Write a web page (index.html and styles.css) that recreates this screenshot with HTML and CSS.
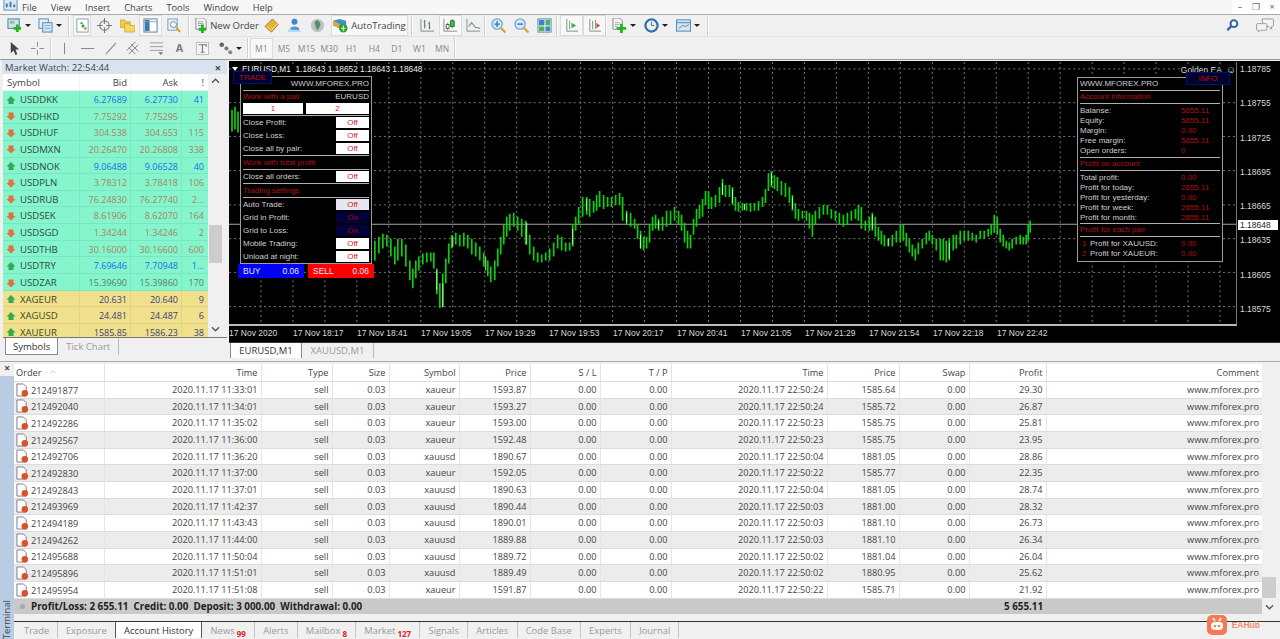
FILE: index.html
```html
<!DOCTYPE html>
<html lang="en">
<head>
  <meta charset="UTF-8" />
  <title>MetaTrader 4 - EURUSD,M1</title>
  <link rel="stylesheet" href="styles.css">
</head>
<body>

  <!-- icon sheet -->
  <svg class="icon-sheet" aria-hidden="true">
    <symbol id="i-app" viewBox="0 0 16 16"><rect x="1" y="2" width="14" height="12" fill="#dbe8f4" stroke="#5b8db8"/><path d="M4 11V7M8 11V5M12 11V8" stroke="#3a7ca5" stroke-width="2"/></symbol>
    <symbol id="i-new" viewBox="0 0 16 16"><rect x="1" y="1" width="12" height="10" fill="#cfe3ef" stroke="#3a7ca5"/><rect x="3" y="3" width="5" height="3" fill="#8fbf8f"/><path d="M11 7v8M7 11h8" stroke="#22b422" stroke-width="3"/></symbol>
    <symbol id="i-profile" viewBox="0 0 16 16"><rect x="1" y="1" width="10" height="10" fill="#e6f0f8" stroke="#4b86b4"/><rect x="5" y="5" width="10" height="10" fill="#d3e4f2" stroke="#4b86b4"/><path d="M7 8h6M7 11h6" stroke="#7fa8c8"/></symbol>
    <symbol id="i-mw" viewBox="0 0 16 16"><rect x="2" y="1" width="12" height="14" fill="#fff" stroke="#7d9cb5"/><path d="M5 6l2-2 2 2z" fill="#2ea84a"/><path d="M7 7h3v3H7z" fill="#2ea84a"/><path d="M9 10h4l-2 3z" fill="#e2703a"/></symbol>
    <symbol id="i-cross" viewBox="0 0 16 16"><circle cx="8" cy="8" r="5" fill="none" stroke="#888" stroke-width="1.200"/><path d="M8 0v6M8 10v6M0 8h6M10 8h6" stroke="#777" stroke-width="1.200"/></symbol>
    <symbol id="i-folder" viewBox="0 0 16 16"><path d="M0 2h5l1 2h5v6H0z" fill="#eec94f" stroke="#c49a25" stroke-width=".7"/><path d="M5 6h5l1 2h5v7H5z" fill="#f5d763" stroke="#c49a25" stroke-width=".7"/></symbol>
    <symbol id="i-nav" viewBox="0 0 16 16"><rect x="1" y="1" width="14" height="14" fill="#fff" stroke="#4f7ea8"/><rect x="2" y="2" width="5" height="12" fill="#3f79ad"/><path d="M1 4h14" stroke="#7fa8c8"/></symbol>
    <symbol id="i-docglass" viewBox="0 0 16 16"><rect x="2" y="1" width="10" height="12" fill="#eaf1f6" stroke="#7d9cb5"/><circle cx="8" cy="7" r="3.200" fill="#fff" stroke="#5e87a6"/><path d="M11 10l4 5" stroke="#c9a227" stroke-width="2"/></symbol>
    <symbol id="i-order" viewBox="0 0 16 16"><path d="M2 0h8l3 3v9H2z" fill="#f7f7f7" stroke="#8a8a8a"/><path d="M4 4h6M4 6h6M4 8h4" stroke="#999"/><path d="M9 7v9M5 12h8" stroke="#22b422" stroke-width="3"/></symbol>
    <symbol id="i-gold" viewBox="0 0 16 16"><path d="M9 1l6 6-7 8-7-6z" fill="#e8b23a" stroke="#a97c18"/><path d="M3 9l5 4 6-7" fill="none" stroke="#fbe08a"/></symbol>
    <symbol id="i-person" viewBox="0 0 16 16"><circle cx="8" cy="4" r="3.200" fill="#3f86cf"/><path d="M3 12c0-4 10-4 10 0v1H3z" fill="#4f97dc"/><path d="M1 13c2-2 4-1 5 0 2-1 7-1 9 2H1z" fill="#bcd9ef"/></symbol>
    <symbol id="i-globe" viewBox="0 0 16 16"><circle cx="8" cy="8" r="7" fill="#bcc4c4"/><path d="M6 3c3-1 5 1 5 4s-2 3-2 6c-2 0-3-3-3-4S4 5 6 3z" fill="#5d8d6a"/></symbol>
    <symbol id="i-auto" viewBox="0 0 16 16"><path d="M7 1l7 2v5l-7 3-7-3V3z" fill="#3f8fc9"/><path d="M0 3l7 3v5l-7-3z" fill="#e8a23a"/><circle cx="11" cy="11" r="4.500" fill="#2aa52a"/><path d="M11 8v6M8.600 11h4.800" stroke="#fff"/></symbol>
    <symbol id="i-bars" viewBox="0 0 16 16"><path d="M1 1v13h14" fill="none" stroke="#7d8f7d"/><path d="M5 2v9M4 4h1M5 8h1M10 4v8M9 6h1M10 10h1" stroke="#5d6f5d" stroke-width="1.100"/></symbol>
    <symbol id="i-candle" viewBox="0 0 16 16"><path d="M1 1v13h14" fill="none" stroke="#7d8f7d"/><path d="M5 5v8M10 1v10" stroke="#3a5"/><rect x="8" y="3" width="4" height="6" fill="#3fbf4f" stroke="#2a7a33"/><rect x="3.500" y="7" width="3" height="4" fill="#fff" stroke="#555"/></symbol>
    <symbol id="i-line" viewBox="0 0 16 16"><path d="M1 1v13h14" fill="none" stroke="#7d8f7d"/><path d="M3 9l3-4 4 5 5 1" fill="none" stroke="#7a8a7a" stroke-width="1.100"/></symbol>
    <symbol id="i-zplus" viewBox="0 0 16 16"><circle cx="6.500" cy="6.500" r="5.500" fill="#d8e9f7" stroke="#6aa3d6" stroke-width="1.300"/><path d="M6.500 3.500v6M3.500 6.500h6" stroke="#2f74b5" stroke-width="1.500"/><path d="M10.500 10.500l5 5" stroke="#d0a93a" stroke-width="2.400"/></symbol>
    <symbol id="i-zminus" viewBox="0 0 16 16"><circle cx="6.500" cy="6.500" r="5.500" fill="#d8e9f7" stroke="#6aa3d6" stroke-width="1.300"/><path d="M3.500 6.500h6" stroke="#2f74b5" stroke-width="1.500"/><path d="M10.500 10.500l5 5" stroke="#d0a93a" stroke-width="2.400"/></symbol>
    <symbol id="i-tile" viewBox="0 0 16 16"><rect x="1" y="1" width="14" height="14" fill="#fff" stroke="#4f86b4"/><rect x="2" y="2" width="6" height="6" fill="#3f86c4"/><rect x="9" y="2" width="5" height="6" fill="#4fae5f"/><rect x="2" y="9" width="6" height="5" fill="#4fae5f"/><rect x="9" y="9" width="5" height="5" fill="#3f86c4"/></symbol>
    <symbol id="i-shift" viewBox="0 0 16 16"><path d="M3 1v13h12" fill="none" stroke="#7d8f7d"/><path d="M6 3v9" stroke="#7d8f7d"/><path d="M8 5l5 3-5 3z" fill="#3fae4f"/></symbol>
    <symbol id="i-scroll" viewBox="0 0 16 16"><path d="M3 1v13h12" fill="none" stroke="#7d8f7d"/><path d="M6 3v9M9 2v10" stroke="#7d8f7d"/><path d="M10 5l4 3-4 3z" fill="#c9504a"/></symbol>
    <symbol id="i-docplus" viewBox="0 0 16 16"><path d="M1 0h7l3 3v9H1z" fill="#f4f4f4" stroke="#888"/><path d="M3 5h5M3 7h5M3 9h3" stroke="#aaa"/><path d="M10 6v10M5 11h10" stroke="#22b422" stroke-width="3"/></symbol>
    <symbol id="i-clock" viewBox="0 0 16 16"><circle cx="8" cy="8" r="6.500" fill="#e6f0f8" stroke="#2f6fa8" stroke-width="2.400"/><path d="M8 4v4h3" fill="none" stroke="#666"/></symbol>
    <symbol id="i-template" viewBox="0 0 16 16"><rect x=".5" y="2" width="15" height="12" fill="#d3e4f2" stroke="#4b86b4"/><path d="M.5 5h15" stroke="#4b86b4"/><path d="M3 11l4-3 3 1 4-2" fill="none" stroke="#6a8a9a"/></symbol>
    <symbol id="i-search" viewBox="0 0 16 16"><circle cx="9.500" cy="6" r="3.600" fill="#fff" stroke="#3a66a8" stroke-width="2.200"/><path d="M6.500 9l-4 4" stroke="#3a66a8" stroke-width="2.600"/></symbol>
    <symbol id="i-chat" viewBox="0 0 20 16"><path d="M7 1h11a1 1 0 011 1v6a1 1 0 01-1 1h-1v3l-3-3H8z" fill="#f4f4f4" stroke="#999"/><path d="M2 6h9a1 1 0 011 1v5a1 1 0 01-1 1H5l-2 2v-2H2a1 1 0 01-1-1V7a1 1 0 011-1z" fill="#f4f4f4" stroke="#999"/></symbol>
    <symbol id="i-cursor" viewBox="0 0 12 16"><path d="M2 1v12l3-3 2 5 2-1-2-5h4z" fill="#444"/></symbol>
    <symbol id="i-plus" viewBox="0 0 16 16"><path d="M8 1v5M8 10v5M1 8h5M10 8h5" stroke="#888"/></symbol>
    <symbol id="i-vline" viewBox="0 0 16 16"><path d="M8 2v12" stroke="#888" stroke-width="1.100"/></symbol>
    <symbol id="i-hline" viewBox="0 0 16 16"><path d="M1 8h14" stroke="#888" stroke-width="1.100"/></symbol>
    <symbol id="i-trend" viewBox="0 0 16 16"><path d="M3 14L14 2" stroke="#888" stroke-width="1.100"/></symbol>
    <symbol id="i-channel" viewBox="0 0 16 16"><path d="M1 10L10 1M3 14L13 4M5 3l8 8M3 7l7 7" stroke="#777"/></symbol>
    <symbol id="i-fibo" viewBox="0 0 16 16"><path d="M1 2h14M1 6h14M1 10h14" stroke="#999"/><path d="M10 12h5l-2.500 3z" fill="#777"/></symbol>
    <symbol id="i-text" viewBox="0 0 16 16"><rect x="1.500" y="1.500" width="13" height="13" fill="#f5f5f5" stroke="#bbb"/><path d="M4 4h8v2M8 4v8M6 12h4" fill="none" stroke="#777" stroke-width="1.200"/></symbol>
    <symbol id="i-shapes" viewBox="0 0 16 16"><circle cx="4" cy="4" r="2.500" fill="#666"/><circle cx="9" cy="8" r="2.200" fill="#777"/><circle cx="13" cy="12" r="2.200" fill="#888"/></symbol>
    <symbol id="i-up" viewBox="0 0 10 10"><path d="M5 1l4.500 4.500H7.500V9h-5V5.500H.5z" fill="#35a850"/></symbol>
    <symbol id="i-down" viewBox="0 0 10 10"><path d="M5 9.500L.5 5h2V1.500h5V5h2z" fill="#e2703a"/></symbol>
    <symbol id="i-sell" viewBox="0 0 14 14"><path d="M1 .500h7l3 3v10H1z" fill="#fff" stroke="#777"/><circle cx="9.500" cy="10.500" r="3.500" fill="#d9502a"/></symbol>
    <symbol id="i-chev-up" viewBox="0 0 10 6"><path d="M1 5l4-4 4 4" fill="none" stroke="#555" stroke-width="1.400"/></symbol>
    <symbol id="i-chev-down" viewBox="0 0 10 6"><path d="M1 1l4 4 4-4" fill="none" stroke="#555" stroke-width="1.400"/></symbol>
  </svg>

  <div class="app">

    <div class="menubar">
      <svg class="app-icon"><use href="#i-app"/></svg>
      <span class="menu-item">File</span>
      <span class="menu-item">View</span>
      <span class="menu-item">Insert</span>
      <span class="menu-item">Charts</span>
      <span class="menu-item">Tools</span>
      <span class="menu-item">Window</span>
      <span class="menu-item">Help</span>
      <div class="win-btns"><span>–</span><span>❐</span><span>×</span></div>
    </div>

    <div class="toolbar">
      <button class="tool tool-drop tool-drop-s"><svg class="ic"><use href="#i-new"/></svg><i class="caret"></i></button>
      <button class="tool tool-drop tool-drop-s"><svg class="ic"><use href="#i-profile"/></svg><i class="caret"></i></button>
      <i class="sep"></i>
      <button class="tool tool-narrow pressed"><svg class="ic"><use href="#i-mw"/></svg></button>
      <button class="tool"><svg class="ic"><use href="#i-cross"/></svg></button>
      <button class="tool"><svg class="ic"><use href="#i-folder"/></svg></button>
      <button class="tool pressed"><svg class="ic"><use href="#i-nav"/></svg></button>
      <button class="tool"><svg class="ic"><use href="#i-docglass"/></svg></button>
      <i class="sep"></i>
      <button class="tool tool-text tool-order"><svg class="ic"><use href="#i-order"/></svg>New Order</button>
      <button class="tool"><svg class="ic"><use href="#i-gold"/></svg></button>
      <button class="tool"><svg class="ic"><use href="#i-person"/></svg></button>
      <button class="tool"><svg class="ic"><use href="#i-globe"/></svg></button>
      <button class="tool tool-text tool-auto pressed"><svg class="ic"><use href="#i-auto"/></svg>AutoTrading</button>
      <i class="sep"></i>
      <button class="tool"><svg class="ic"><use href="#i-bars"/></svg></button>
      <button class="tool pressed"><svg class="ic"><use href="#i-candle"/></svg></button>
      <button class="tool"><svg class="ic"><use href="#i-line"/></svg></button>
      <i class="sep sep-tight"></i>
      <button class="tool"><svg class="ic"><use href="#i-zplus"/></svg></button>
      <button class="tool"><svg class="ic"><use href="#i-zminus"/></svg></button>
      <button class="tool"><svg class="ic"><use href="#i-tile"/></svg></button>
      <i class="sep sep-gap"></i>
      <button class="tool pressed"><svg class="ic"><use href="#i-shift"/></svg></button>
      <button class="tool pressed"><svg class="ic"><use href="#i-scroll"/></svg></button>
      <i class="sep sep-tight"></i>
      <button class="tool tool-drop"><svg class="ic"><use href="#i-docplus"/></svg><i class="caret"></i></button>
      <button class="tool tool-drop"><svg class="ic"><use href="#i-clock"/></svg><i class="caret"></i></button>
      <button class="tool tool-drop"><svg class="ic"><use href="#i-template"/></svg><i class="caret"></i></button>
      <i class="sep"></i>
      <div class="toolbar-right">
        <button class="tool"><svg class="ic"><use href="#i-search"/></svg></button>
        <button class="tool tool-chat"><svg class="ic ic-wide"><use href="#i-chat"/></svg></button>
      </div>
    </div>

    <div class="toolbar toolbar-low">
      <button class="tool"><svg class="ic"><use href="#i-cursor"/></svg></button>
      <button class="tool"><svg class="ic"><use href="#i-plus"/></svg></button>
      <i class="sep sep-low"></i>
      <button class="tool"><svg class="ic"><use href="#i-vline"/></svg></button>
      <button class="tool"><svg class="ic"><use href="#i-hline"/></svg></button>
      <button class="tool"><svg class="ic"><use href="#i-trend"/></svg></button>
      <button class="tool"><svg class="ic"><use href="#i-channel"/></svg></button>
      <button class="tool"><svg class="ic"><use href="#i-fibo"/></svg></button>
      <button class="tool tool-letter">A</button>
      <button class="tool"><svg class="ic"><use href="#i-text"/></svg></button>
      <button class="tool tool-drop"><svg class="ic"><use href="#i-shapes"/></svg><i class="caret"></i></button>
      <i class="sep sep-low"></i>
      <button class="tf pressed">M1</button>
      <button class="tf">M5</button>
      <button class="tf">M15</button>
      <button class="tf">M30</button>
      <button class="tf">H1</button>
      <button class="tf">H4</button>
      <button class="tf">D1</button>
      <button class="tf">W1</button>
      <button class="tf">MN</button>
      <i class="sep sep-low"></i>
    </div>

    <div class="workspace">

      <section class="market">
        <div class="market-title"><span>Market Watch: 22:54:44</span><b>×</b></div>
        <div class="market-body">
          <div class="market-list">
            <div class="mw-row mw-head"><span>Symbol</span><span>Bid</span><span>Ask</span><span>!</span></div>
            <div class="mw-row forex tick-up"><span><svg class="arrow"><use href="#i-up"/></svg>USDDKK</span><span>6.27689</span><span>6.27730</span><span>41</span></div>
            <div class="mw-row forex tick-down"><span><svg class="arrow"><use href="#i-down"/></svg>USDHKD</span><span>7.75292</span><span>7.75295</span><span>3</span></div>
            <div class="mw-row forex tick-down"><span><svg class="arrow"><use href="#i-down"/></svg>USDHUF</span><span>304.538</span><span>304.653</span><span>115</span></div>
            <div class="mw-row forex tick-down"><span><svg class="arrow"><use href="#i-down"/></svg>USDMXN</span><span>20.26470</span><span>20.26808</span><span>338</span></div>
            <div class="mw-row forex tick-up"><span><svg class="arrow"><use href="#i-up"/></svg>USDNOK</span><span>9.06488</span><span>9.06528</span><span>40</span></div>
            <div class="mw-row forex tick-down"><span><svg class="arrow"><use href="#i-down"/></svg>USDPLN</span><span>3.78312</span><span>3.78418</span><span>106</span></div>
            <div class="mw-row forex tick-down"><span><svg class="arrow"><use href="#i-down"/></svg>USDRUB</span><span>76.24830</span><span>76.27740</span><span>2...</span></div>
            <div class="mw-row forex tick-down"><span><svg class="arrow"><use href="#i-down"/></svg>USDSEK</span><span>8.61906</span><span>8.62070</span><span>164</span></div>
            <div class="mw-row forex tick-down"><span><svg class="arrow"><use href="#i-down"/></svg>USDSGD</span><span>1.34244</span><span>1.34246</span><span>2</span></div>
            <div class="mw-row forex tick-down"><span><svg class="arrow"><use href="#i-down"/></svg>USDTHB</span><span>30.16000</span><span>30.16600</span><span>600</span></div>
            <div class="mw-row forex tick-up"><span><svg class="arrow"><use href="#i-up"/></svg>USDTRY</span><span>7.69646</span><span>7.70948</span><span>1...</span></div>
            <div class="mw-row forex tick-flat"><span><svg class="arrow"><use href="#i-down"/></svg>USDZAR</span><span>15.39690</span><span>15.39860</span><span>170</span></div>
            <div class="mw-row metal"><span><svg class="arrow"><use href="#i-up"/></svg>XAGEUR</span><span>20.631</span><span>20.640</span><span>9</span></div>
            <div class="mw-row metal"><span><svg class="arrow"><use href="#i-up"/></svg>XAGUSD</span><span>24.481</span><span>24.487</span><span>6</span></div>
            <div class="mw-row metal"><span><svg class="arrow"><use href="#i-up"/></svg>XAUEUR</span><span>1585.85</span><span>1586.23</span><span>38</span></div>
          </div>
          <div class="vscroll">
            <svg class="chev"><use href="#i-chev-up"/></svg>
            <i class="thumb"></i>
            <svg class="chev chev-down"><use href="#i-chev-down"/></svg>
          </div>
        </div>
        <div class="mw-tabs">
          <span class="mw-tab active">Symbols</span>
          <span class="mw-tab">Tick Chart</span>
        </div>
      </section>

      <section class="chart-area">
        <div class="chart">
          <svg class="plot" viewBox="229 62 1008 264" preserveAspectRatio="none">
            <path class="grid" d="M261 62V326M293 62V326M325 62V326M357 62V326M389 62V326M421 62V326M453 62V326M485 62V326M517 62V326M549 62V326M581 62V326M613 62V326M645 62V326M677 62V326M709 62V326M741 62V326M773 62V326M805 62V326M837 62V326M869 62V326M901 62V326M933 62V326M965 62V326M997 62V326M1029 62V326M1061 62V326M1093 62V326M1125 62V326M1157 62V326M1189 62V326M1221 62V326"/>
            <path class="grid" d="M229 69H1237M229 103H1237M229 137H1237M229 171.500H1237M229 206H1237M229 240H1237M229 274H1237M229 308.500H1237"/>
            <path class="bid-line" d="M229 225.500H1237"/>
            <path class="candles" d="M232 110V132M235 107V130M238 112V133M375 242V262M379 238V255M383 235V250M387 236V248M391 240V258M395 248V266M398 240V262M402 240V258M406 246V268M410 262V282M413 270V290M416 262V280M419 258V272M423 255V266M427 254V264M431 254V263M434 254V270M437 270V296M440 285V310M443 275V309M446 260V285M449 245V265M452 236V250M456 234V246M460 236V248M464 234V248M468 236V250M472 240V256M476 244V258M480 248V262M484 254V268M488 262V278M491 268V284M495 262V282M498 250V268M501 238V256M504 226V246M507 218V238M510 215V232M514 214V228M518 218V232M522 220V238M526 222V246M530 236V256M534 248V262M538 254V264M542 256V264M546 254V262M550 250V262M554 244V258M558 236V250M562 238V252M566 244V253M570 244V252M573 226V248M576 218V232M579 208V226M583 198V218M587 198V216M590 200V218M594 202V214M597 196V212M600 192V208M604 196V210M608 198V208M612 198V208M616 196V206M620 194V206M623 198V222M627 212V226M631 214V228M635 220V230M638 226V240M641 232V250M644 238V252M647 238V250M650 226V244M653 218V232M656 216V230M659 220V232M663 218V232M667 212V228M671 212V226M675 208V222M679 212V226M682 216V232M685 224V244M688 232V250M691 236V250M694 220V236M697 210V228M700 206V220M703 200V218M706 192V206M709 192V210M712 198V210M716 196V208M720 188V204M723 180V196M726 186V198M730 186V198M733 188V206M736 198V212M739 203V213M743 204V212M747 204V212M751 204V213M755 204V212M759 202V212M763 198V208M766 190V204M769 174V192M772 172V188M775 176V190M778 178V192M782 182V196M786 184V198M790 188V204M793 196V212M796 204V220M799 210V222M803 212V220M807 212V222M810 214V230M813 216V238M816 212V226M820 208V220M824 206V216M828 206V216M832 210V220M836 212V222M840 214V226M844 216V228M848 214V226M852 212V222M856 210V220M859 206V222M862 208V230M866 222V232M870 218V232M873 214V232M876 218V238M879 228V242M882 232V246M885 236V248M889 240V248M893 236V248M897 232V244M901 226V244M904 226V242M907 234V248M910 240V254M913 246V258M916 250V262M919 244V256M923 240V250M927 234V246M930 232V242M933 236V246M937 240V252M941 240V262M944 240V262M947 242V264M950 240V262M954 236V252M957 236V250M961 232V246M965 232V242M969 232V242M973 234V242M977 236V244M981 232V240M985 232V240M989 230V238M992 226V236M995 216V234M998 218V236M1001 230V244M1004 236V248M1007 242V250M1010 244V252M1013 240V250M1017 238V246M1021 236V246M1024 238V246M1027 236V246M1029 226V242M1031 222V234"/>
            <path class="wicks" d="M437 272V292M443 285V309M453 238V248M486 258V272M527 224V246M573 230V246M587 200V212M627 214V224M641 236V250M659 222V230M723 184V196M733 190V204M745 205V211M772 174V186M793 198V210M873 216V230M889 240V247M950 244V260"/>
          </svg>

          <div class="price-axis">
            <span>1.18785</span><span>1.18755</span><span>1.18725</span><span>1.18695</span>
            <span>1.18665</span><span>1.18635</span><span>1.18605</span><span>1.18575</span>
            <span class="bid-label">1.18648</span>
          </div>

          <div class="time-axis">
            <span>17 Nov 2020</span><span>17 Nov 18:17</span><span>17 Nov 18:41</span><span>17 Nov 19:05</span>
            <span>17 Nov 19:29</span><span>17 Nov 19:53</span><span>17 Nov 20:17</span><span>17 Nov 20:41</span>
            <span>17 Nov 21:05</span><span>17 Nov 21:29</span><span>17 Nov 21:54</span><span>17 Nov 22:18</span>
            <span>17 Nov 22:42</span>
          </div>

          <div class="chart-title"><i class="tri"></i>EURUSD,M1&nbsp; 1.18643 1.18652 1.18643 1.18648</div>
          <div class="chart-ea">Golden EA <i class="ea-face">☺</i></div>

          <div class="ea-tab ea-tab-trade">TRADE</div>
          <div class="ea-panel ea-trade">
            <div class="ea-head">WWW.MFOREX.PRO</div>
            <div class="ea-pair"><span class="red">Work with a pair</span><span>EURUSD</span></div>
            <div class="ea-inputs ea-line"><span class="ea-btn">1</span><span class="ea-btn">2</span></div>
            <div class="ea-row"><span>Close Profit:</span><span class="ea-btn">Off</span></div>
            <div class="ea-row"><span>Close Loss:</span><span class="ea-btn">Off</span></div>
            <div class="ea-row ea-line"><span>Close all by pair:</span><span class="ea-btn">Off</span></div>
            <div class="ea-sec ea-line">Work with total profit</div>
            <div class="ea-row ea-line"><span>Close all orders:</span><span class="ea-btn">Off</span></div>
            <div class="ea-sec ea-line">Trading settings</div>
            <div class="ea-row"><span>Auto Trade:</span><span class="ea-btn ea-grey">Off</span></div>
            <div class="ea-row"><span>Grid in Profit:</span><span class="ea-btn ea-on">On</span></div>
            <div class="ea-row"><span>Grid to Loss:</span><span class="ea-btn ea-on">On</span></div>
            <div class="ea-row"><span>Mobile Trading:</span><span class="ea-btn">Off</span></div>
            <div class="ea-row"><span>Unload at night:</span><span class="ea-btn">Off</span></div>
          </div>
          <div class="ea-orders">
            <div class="ea-buy"><span>BUY</span><span>0.06</span></div>
            <div class="ea-sell"><span>SELL</span><span>0.06</span></div>
          </div>

          <div class="ea-tab ea-tab-info">INFO</div>
          <div class="ea-panel ea-info">
            <div class="ea-head">WWW.MFOREX.PRO</div>
            <div class="ea-sec ea-line">Account information</div>
            <dl class="ea-list ea-line">
              <dt>Balanse:</dt><dd>5655.11</dd>
              <dt>Equity:</dt><dd>5655.11</dd>
              <dt>Margin:</dt><dd>0.00</dd>
              <dt>Free margin:</dt><dd>5655.11</dd>
              <dt>Open orders:</dt><dd>0</dd>
            </dl>
            <div class="ea-sec ea-line">Profit on account</div>
            <dl class="ea-list ea-line">
              <dt>Total profit:</dt><dd>0.00</dd>
              <dt>Profit for today:</dt><dd>2655.11</dd>
              <dt>Profit for yesterday:</dt><dd>0.00</dd>
              <dt>Profit for week:</dt><dd>2655.11</dd>
              <dt>Profit for month:</dt><dd>2655.11</dd>
            </dl>
            <div class="ea-sec ea-line">Profit for each pair</div>
            <dl class="ea-list">
              <dt><b class="red">1</b>Profit for XAUUSD:</dt><dd>0.00</dd>
              <dt><b class="red">2</b>Profit for XAUEUR:</dt><dd>0.00</dd>
            </dl>
          </div>
        </div>

        <div class="chart-tabs">
          <span class="chart-tab active">EURUSD,M1</span>
          <span class="chart-tab">XAUUSD,M1</span>
        </div>
      </section>
    </div>

    <section class="terminal">
      <div class="term-side">
        <b class="term-close">×</b>
        <span class="term-label">Terminal</span>
      </div>
      <div class="term-main">
        <div class="term-grid">
          <table class="history">
            <colgroup>
              <col class="c-order"><col class="c-time"><col class="c-type"><col class="c-size"><col class="c-sym"><col class="c-px"><col class="c-sl"><col class="c-px"><col class="c-time2"><col class="c-px2"><col class="c-sym"><col class="c-profit"><col>
            </colgroup>
            <thead>
              <tr><th>Order <svg class="sort"><use href="#i-chev-up"/></svg></th><th>Time</th><th>Type</th><th>Size</th><th>Symbol</th><th>Price</th><th>S / L</th><th>T / P</th><th>Time</th><th>Price</th><th>Swap</th><th>Profit</th><th>Comment</th></tr>
            </thead>
            <tbody>
              <tr><td><svg class="doc"><use href="#i-sell"/></svg>212491877</td><td>2020.11.17 11:33:01</td><td>sell</td><td>0.03</td><td>xaueur</td><td>1593.87</td><td>0.00</td><td>0.00</td><td>2020.11.17 22:50:24</td><td>1585.64</td><td>0.00</td><td>29.30</td><td>www.mforex.pro</td></tr>
              <tr><td><svg class="doc"><use href="#i-sell"/></svg>212492040</td><td>2020.11.17 11:34:01</td><td>sell</td><td>0.03</td><td>xaueur</td><td>1593.27</td><td>0.00</td><td>0.00</td><td>2020.11.17 22:50:24</td><td>1585.72</td><td>0.00</td><td>26.87</td><td>www.mforex.pro</td></tr>
              <tr><td><svg class="doc"><use href="#i-sell"/></svg>212492286</td><td>2020.11.17 11:35:02</td><td>sell</td><td>0.03</td><td>xaueur</td><td>1593.00</td><td>0.00</td><td>0.00</td><td>2020.11.17 22:50:23</td><td>1585.75</td><td>0.00</td><td>25.81</td><td>www.mforex.pro</td></tr>
              <tr><td><svg class="doc"><use href="#i-sell"/></svg>212492567</td><td>2020.11.17 11:36:00</td><td>sell</td><td>0.03</td><td>xaueur</td><td>1592.48</td><td>0.00</td><td>0.00</td><td>2020.11.17 22:50:23</td><td>1585.75</td><td>0.00</td><td>23.95</td><td>www.mforex.pro</td></tr>
              <tr><td><svg class="doc"><use href="#i-sell"/></svg>212492706</td><td>2020.11.17 11:36:20</td><td>sell</td><td>0.03</td><td>xauusd</td><td>1890.67</td><td>0.00</td><td>0.00</td><td>2020.11.17 22:50:04</td><td>1881.05</td><td>0.00</td><td>28.86</td><td>www.mforex.pro</td></tr>
              <tr><td><svg class="doc"><use href="#i-sell"/></svg>212492830</td><td>2020.11.17 11:37:00</td><td>sell</td><td>0.03</td><td>xaueur</td><td>1592.05</td><td>0.00</td><td>0.00</td><td>2020.11.17 22:50:22</td><td>1585.77</td><td>0.00</td><td>22.35</td><td>www.mforex.pro</td></tr>
              <tr><td><svg class="doc"><use href="#i-sell"/></svg>212492843</td><td>2020.11.17 11:37:01</td><td>sell</td><td>0.03</td><td>xauusd</td><td>1890.63</td><td>0.00</td><td>0.00</td><td>2020.11.17 22:50:04</td><td>1881.05</td><td>0.00</td><td>28.74</td><td>www.mforex.pro</td></tr>
              <tr><td><svg class="doc"><use href="#i-sell"/></svg>212493969</td><td>2020.11.17 11:42:37</td><td>sell</td><td>0.03</td><td>xauusd</td><td>1890.44</td><td>0.00</td><td>0.00</td><td>2020.11.17 22:50:03</td><td>1881.00</td><td>0.00</td><td>28.32</td><td>www.mforex.pro</td></tr>
              <tr><td><svg class="doc"><use href="#i-sell"/></svg>212494189</td><td>2020.11.17 11:43:43</td><td>sell</td><td>0.03</td><td>xauusd</td><td>1890.01</td><td>0.00</td><td>0.00</td><td>2020.11.17 22:50:03</td><td>1881.10</td><td>0.00</td><td>26.73</td><td>www.mforex.pro</td></tr>
              <tr><td><svg class="doc"><use href="#i-sell"/></svg>212494262</td><td>2020.11.17 11:44:00</td><td>sell</td><td>0.03</td><td>xauusd</td><td>1889.88</td><td>0.00</td><td>0.00</td><td>2020.11.17 22:50:03</td><td>1881.10</td><td>0.00</td><td>26.34</td><td>www.mforex.pro</td></tr>
              <tr><td><svg class="doc"><use href="#i-sell"/></svg>212495688</td><td>2020.11.17 11:50:04</td><td>sell</td><td>0.03</td><td>xauusd</td><td>1889.72</td><td>0.00</td><td>0.00</td><td>2020.11.17 22:50:02</td><td>1881.04</td><td>0.00</td><td>26.04</td><td>www.mforex.pro</td></tr>
              <tr><td><svg class="doc"><use href="#i-sell"/></svg>212495896</td><td>2020.11.17 11:51:01</td><td>sell</td><td>0.03</td><td>xauusd</td><td>1889.49</td><td>0.00</td><td>0.00</td><td>2020.11.17 22:50:02</td><td>1880.95</td><td>0.00</td><td>25.62</td><td>www.mforex.pro</td></tr>
              <tr><td><svg class="doc"><use href="#i-sell"/></svg>212495954</td><td>2020.11.17 11:51:08</td><td>sell</td><td>0.03</td><td>xaueur</td><td>1591.87</td><td>0.00</td><td>0.00</td><td>2020.11.17 22:50:22</td><td>1585.71</td><td>0.00</td><td>21.92</td><td>www.mforex.pro</td></tr>
            </tbody>
            <tfoot>
              <tr><td colspan="11"><i class="dot"></i>Profit/Loss: 2 655.11 &nbsp;Credit: 0.00 &nbsp;Deposit: 3 000.00 &nbsp;Withdrawal: 0.00</td><td>5 655.11</td><td></td></tr>
            </tfoot>
          </table>
          <div class="vscroll vscroll-term">
            <i class="thumb"></i>
            <svg class="chev chev-down"><use href="#i-chev-down"/></svg>
          </div>
        </div>
        <div class="term-tabs">
          <span class="term-tab">Trade</span>
          <span class="term-tab">Exposure</span>
          <span class="term-tab active">Account History</span>
          <span class="term-tab">News<sub>99</sub></span>
          <span class="term-tab">Alerts</span>
          <span class="term-tab">Mailbox<sub>8</sub></span>
          <span class="term-tab">Market<sub>127</sub></span>
          <span class="term-tab">Signals</span>
          <span class="term-tab">Articles</span>
          <span class="term-tab">Code Base</span>
          <span class="term-tab">Experts</span>
          <span class="term-tab">Journal</span>
        </div>
      </div>
    </section>

    <div class="watermark">
      <svg viewBox="0 0 20 20"><rect width="20" height="20" rx="5" fill="#f47a55"/><rect x="4" y="7" width="12" height="8" rx="4" fill="#fff"/><circle cx="8" cy="11" r="1.300" fill="#f47a55"/><circle cx="12" cy="11" r="1.300" fill="#f47a55"/><path d="M6 3l2 3M14 3l-2 3" stroke="#fff" stroke-width="1.500"/></svg>
      <span>EAHub</span>
    </div>
  </div>

</body>
</html>
```

FILE: styles.css
```css
:root {
  --bar-color: #f0f0f0;
  --line-color: #a9a9a9;
  --text-color: #444;
  --muted-color: #9a9a9a;
  --ea-red: #b01010;
}

* {
  box-sizing: border-box;
}

body {
  margin: 0;
  background-color: var(--bar-color);
  color: var(--text-color);
  font-family: "Open Sans", sans-serif;
  font-size: 9.5px;
  overflow: hidden;
}

i, b {
  font-style: normal;
}

button {
  font: inherit;
  color: inherit;
  background: none;
  border: 1px solid transparent;
  padding: 0;
}

.icon-sheet {
  display: none;
}

.app {
  position: relative;
  display: flex;
  flex-direction: column;
  width: 1280px;
  height: 639px;
  overflow: hidden;
}

/* menu */
.menubar {
  display: flex;
  align-items: center;
  height: 15px;
  padding-left: 15px;
  background-color: #f7f7f7;
  border-bottom: 1px solid var(--line-color);
  position: relative;
  font-size: 9.3px;
}

.app-icon {
  position: absolute;
  left: 3px;
  top: -3px;
  width: 15px;
  height: 15px;
}

.menu-item {
  padding: 0 7px;
}

.win-btns {
  display: flex;
  margin-left: auto;
  height: 14px;
  color: #666;
  background-color: #fff;
}

.win-btns span {
  width: 16px;
  text-align: center;
  font-size: 9px;
  line-height: 13px;
}

/* toolbars */
.toolbar {
  display: flex;
  align-items: center;
  height: 22px;
  padding-left: 3px;
  background-color: var(--bar-color);
  border-bottom: 1px solid #e4e4e4;
}

.toolbar-low {
  height: 23px;
  border-bottom: 1px solid #9a9a9a;
}

.tool {
  display: flex;
  align-items: center;
  justify-content: center;
  flex: none;
  width: 23px;
  height: 21px;
}

.tool-narrow {
  width: 18px;
  margin-right: 2px;
}

.tool-drop {
  width: 32px;
  justify-content: flex-start;
  padding-left: 3px;
}

.tool-drop-s {
  width: 31px;
}

.tool-text {
  width: auto;
  gap: 1px;
  padding: 0 1px;
  font-size: 9.5px;
  white-space: nowrap;
}

.tool-order {
  width: 67px;
}

.tool-auto {
  width: 77px;
  margin-left: 2px;
  gap: 3px;
}

.tool-letter {
  font-family: "Liberation Sans", sans-serif;
  font-weight: bold;
  font-size: 11px;
  color: #777;
}

.pressed {
  background-color: #f8f8f8;
  border-color: #dcdcdc;
}

.ic {
  width: 15px;
  height: 15px;
  flex: none;
}

.ic-wide {
  width: 20px;
}

.caret {
  width: 0;
  height: 0;
  margin-left: 3px;
  border-left: 3px solid transparent;
  border-right: 3px solid transparent;
  border-top: 3px solid #222;
}

.sep {
  flex: none;
  width: 2px;
  height: 20px;
  margin: 0 3px;
  border-left: 1px solid #cfcfcf;
  border-right: 1px solid #fff;
}

.sep-tight {
  margin: 0 1px 0 -1px;
}

.sep-gap {
  margin: 0 2px 0 0;
}

.sep-low {
  margin: 0 1px;
}

.toolbar-right {
  display: flex;
  gap: 9px;
  margin-left: auto;
  padding-right: 3px;
}

.tool-chat {
  width: 24px;
}

.tf {
  flex: none;
  width: 22.600px;
  height: 21px;
  font-size: 8.5px;
  color: #888;
}

/* main area */
.workspace {
  display: flex;
  height: 302px;
  border-bottom: 1px solid var(--line-color);
}

.market {
  display: flex;
  flex-direction: column;
  flex: none;
  width: 227px;
  padding-left: 3px;
}

.market-title {
  display: flex;
  justify-content: space-between;
  align-items: center;
  height: 14px;
  margin-left: -1px;
  padding: 0 6px 0 3px;
  background-color: #d8e3ef;
  font-size: 9.5px;
}

.market-title b {
  font-size: 11px;
}

.market-body {
  display: flex;
  height: 264px;
  overflow: hidden;
  border-bottom: 1px solid #777;
}

.market-list {
  width: 205px;
  background-color: #fff;
}

.mw-row {
  display: grid;
  grid-template-columns: 77px 51px 51px 26px;
  grid-auto-rows: 16.650px;
  font-size: 9px;
  line-height: 17px;
}

.mw-row span {
  text-align: right;
  padding-right: 3px;
  white-space: nowrap;
  overflow: hidden;
  border-right: 1px solid rgba(0, 0, 0, 0.05);
  border-bottom: 1px solid rgba(0, 0, 0, 0.06);
}

.mw-row span:first-child {
  text-align: left;
  padding-left: 3px;
  color: #2d4a3c;
  font-size: 9.6px;
}

.mw-row span:last-child {
  padding-right: 4px;
  border-right: none;
}

.mw-head {
  grid-auto-rows: 17px;
  font-size: 9.5px;
  line-height: 18px;
  color: #444;
}

.mw-head span:first-child {
  padding-left: 4px;
  color: #444;
}

.forex {
  background-color: #84f5cd;
}

.metal {
  background-color: #f0e08c;
  color: #3c3f7c;
}

.metal span:first-child {
  color: #3c4a20;
}

.tick-up {
  color: #1a6fe8;
}

.tick-down {
  color: #a88560;
}

.tick-flat {
  color: #5c7f6a;
}

.arrow {
  width: 10px;
  height: 10px;
  margin-right: 4px;
  vertical-align: -1.500px;
}

.vscroll {
  display: flex;
  flex-direction: column;
  align-items: center;
  position: relative;
  flex: none;
  width: 18px;
}

.chev {
  width: 9px;
  height: 6px;
  margin-top: 4px;
  margin-right: 3px;
}

.chev-down {
  position: absolute;
  bottom: 5px;
  margin: 0 3px 0 0;
}

.thumb {
  position: absolute;
  left: 1px;
  top: 151px;
  width: 13px;
  height: 38px;
  background-color: #cdcdcd;
}

.mw-tabs {
  display: flex;
  height: 20px;
  align-items: flex-start;
  padding-left: 2px;
}

.mw-tab {
  height: 17px;
  padding: 0 8px;
  line-height: 17px;
  color: var(--muted-color);
  border-right: 1px solid #bbb;
}

.mw-tab.active {
  padding: 0 7px;
  color: #333;
  background-color: #fff;
  border: 1px solid #888;
  border-top: none;
}

/* chart */
.chart-area {
  display: flex;
  flex-direction: column;
  flex: 1;
  min-width: 0;
  padding-left: 2px;
}

.chart {
  position: relative;
  display: grid;
  grid-template-columns: 1008px 1fr;
  grid-template-rows: 264px 17px;
  height: 281px;
  margin-top: 1px;
  background-color: #000;
  color: #d8d8d8;
  font-family: "Liberation Sans", sans-serif;
  font-size: 8.5px;
  border-top: 1px solid #000;
}

.plot {
  display: block;
  width: 1008px;
  height: 264px;
  border-right: 1px solid #777;
  border-bottom: 2px solid #bbb;
}

.grid {
  fill: none;
  stroke: #7a7a7a;
  stroke-dasharray: 2 3;
}

.bid-line {
  fill: none;
  stroke: #a6a6a6;
}

.candles {
  fill: none;
  stroke: #10cc10;
  stroke-width: 1.700;
}

.wicks {
  fill: none;
  stroke: #a8f5a8;
  stroke-width: 1;
}

.price-axis {
  position: relative;
  display: flex;
  flex-direction: column;
  gap: 24.300px;
  padding: 2px 0 0 3px;
}

.price-axis span {
  height: 10px;
  line-height: 10px;
}

.bid-label {
  position: absolute;
  left: 1px;
  top: 158px;
  width: 40px;
  height: 11px;
  padding-left: 2px;
  background-color: #fff;
  color: #222;
}

.time-axis {
  grid-column: 1 / 3;
  display: flex;
  line-height: 15px;
}

.time-axis span {
  flex: none;
  width: 64px;
  white-space: nowrap;
}

.chart-title {
  position: absolute;
  left: 3px;
  top: 2px;
  padding-right: 2px;
  background-color: #000;
  color: #eee;
  font-size: 8.3px;
  line-height: 11px;
}

.tri {
  display: inline-block;
  margin-right: 4px;
  vertical-align: 1px;
  border-left: 3px solid transparent;
  border-right: 3px solid transparent;
  border-top: 4px solid #fff;
}

.chart-ea {
  position: absolute;
  right: 44px;
  top: 2px;
  background-color: #000;
  line-height: 11px;
}

.ea-face {
  display: inline-block;
  margin-left: 2px;
  font-size: 10px;
}

/* expert advisor panels */
.ea-panel {
  position: absolute;
  background-color: #000;
  border: 1px solid #9c9c9c;
  font-size: 8px;
  line-height: 10px;
  color: #cfcfcf;
}

.red {
  color: var(--ea-red);
  font-weight: normal;
}

.ea-trade {
  left: 11px;
  top: 14px;
  width: 132px;
  height: 188px;
  padding: 0 2px;
}

.ea-info {
  left: 848px;
  top: 15px;
  width: 146px;
  height: 185px;
  padding: 0 2px;
}

.ea-head {
  height: 14px;
  line-height: 14px;
  border-bottom: 1px solid #b0b0b0;
}

.ea-trade .ea-head {
  text-align: right;
}

.ea-info .ea-head {
  height: 13px;
  line-height: 12px;
}

.ea-pair {
  display: flex;
  justify-content: space-between;
  height: 12px;
  line-height: 12px;
}

.ea-line {
  border-bottom: 1px solid #b0b0b0;
}

.ea-inputs {
  display: grid;
  grid-template-columns: 60px 63px;
  gap: 3px;
  height: 13px;
  padding-bottom: 1px;
}

.ea-row {
  display: flex;
  justify-content: space-between;
  align-items: center;
  height: 13px;
}

.ea-row .ea-btn {
  width: 33px;
}

.ea-row.ea-line {
  height: 14px;
}

.ea-btn {
  display: block;
  height: 11px;
  line-height: 11px;
  text-align: center;
  background-color: #fff;
  color: #d22;
}

.ea-grey {
  background-color: #e6e6ee;
}

.ea-on {
  background-color: #00003a;
  color: #a00;
}

.ea-sec {
  height: 14px;
  line-height: 13px;
  color: var(--ea-red);
}

.ea-info .ea-sec {
  height: 13px;
  line-height: 12px;
}

.ea-list {
  display: grid;
  grid-template-columns: 101px 1fr;
  grid-auto-rows: 10.100px;
  margin: 0;
  padding: 2px 0 0;
}

.ea-list.ea-line {
  height: 53.500px;
}

.ea-list dd {
  margin: 0;
  color: var(--ea-red);
}

.ea-list dt b {
  display: inline-block;
  width: 10px;
  padding-left: 2px;
}

.ea-tab {
  position: absolute;
  z-index: 1;
  height: 13px;
  line-height: 12px;
  font-size: 8px;
  color: #b81010;
  background-color: #00002a;
  border: 1px solid #00107a;
}

.ea-tab-trade {
  left: 4px;
  top: 9px;
  width: 39px;
  padding-left: 5px;
}

.ea-tab-info {
  left: 957px;
  top: 10px;
  width: 44px;
  text-align: center;
}

.ea-orders {
  position: absolute;
  left: 9px;
  top: 202px;
  display: grid;
  grid-template-columns: 66px 66px;
  gap: 4px;
  height: 14px;
  font-size: 8.5px;
  line-height: 14px;
  color: #e8e8ff;
}

.ea-buy, .ea-sell {
  display: flex;
  justify-content: space-between;
  padding: 0 5px;
}

.ea-buy {
  background-color: #0000f5;
}

.ea-sell {
  background-color: #f00;
}

/* chart tabs */
.chart-tabs {
  display: flex;
  height: 16px;
  padding-left: 1px;
  border-top: 1px solid #333;
  color: var(--muted-color);
}

.chart-tab {
  width: 72px;
  line-height: 16px;
  text-align: center;
  border-right: 1px solid #bbb;
  font-size: 9.5px;
}

.chart-tab.active {
  color: #333;
  background-color: #fff;
  border-left: 1px solid #888;
  border-right: 1px solid #888;
}

/* terminal */
.terminal {
  display: flex;
  flex: 1;
  min-height: 0;
}

.term-side {
  display: flex;
  flex-direction: column;
  justify-content: space-between;
  flex: none;
  width: 14px;
  background: linear-gradient(#f0f0f0 14px, #b8cde4 14px);
}

.term-close {
  text-align: center;
  font-size: 10px;
  line-height: 12px;
}

.term-label {
  writing-mode: vertical-rl;
  transform: rotate(180deg);
  align-self: center;
  font-size: 9.5px;
  line-height: 12px;
}

.term-main {
  display: flex;
  flex-direction: column;
  flex: 1;
  min-width: 0;
}

.term-grid {
  display: flex;
  align-items: flex-start;
  flex: none;
  height: 259px;
  padding-top: 2px;
}

.history {
  table-layout: fixed;
  width: 1248px;
  flex: none;
  border-collapse: collapse;
  background-color: #fff;
  font-size: 9.2px;
}

.c-order { width: 90px; }
.c-time { width: 157px; }
.c-time2 { width: 156px; }
.c-type { width: 71px; }
.c-size { width: 57px; }
.c-sym { width: 70px; }
.c-px { width: 71px; }
.c-sl { width: 70px; }
.c-px2 { width: 72px; }
.c-profit { width: 77px; }

.history th, .history td {
  padding: 0 3px 0 0;
  text-align: right;
  white-space: nowrap;
  font-weight: normal;
}

.history th {
  height: 17px;
  border-right: 1px solid #e2e2e2;
  border-bottom: 1px solid #ddd;
}

.history th:first-child, .history td:first-child {
  text-align: left;
  padding-left: 2px;
}

.sort {
  width: 6px;
  height: 4px;
  margin-left: 6px;
  vertical-align: 2px;
  opacity: 0.4;
}

.history tbody td {
  height: 17px;
  border-right: 1px solid #e6e6e6;
  border-bottom: 1px solid #dcdcdc;
}

/* rows come out at 16.67px on average, as in the terminal */
.history tbody tr:nth-child(3n+2) td {
  height: 16px;
}

.history tbody td:last-child,
.history th:last-child {
  border-right: none;
}

.history tbody tr:nth-child(even) {
  background-color: #ececec;
}

.history tfoot td {
  height: 16px;
  background-color: #c9c9c9;
  font-size: 9.8px;
  font-weight: bold;
  color: #222;
}

.dot {
  display: inline-block;
  width: 5px;
  height: 5px;
  margin: 0 6px 0 4px;
  border-radius: 50%;
  background-color: #aaa;
  vertical-align: 1px;
}

.doc {
  width: 13px;
  height: 14px;
  margin-right: 2px;
  vertical-align: -3px;
}

.vscroll-term {
  width: 17px;
  height: 257px;
}

.vscroll-term .thumb {
  top: 213px;
  left: 0;
  width: 14px;
  height: 21px;
}

.vscroll-term .chev-down {
  bottom: 11px;
}

.term-tabs {
  display: flex;
  height: 17px;
  padding-left: 1px;
  border-top: 1px solid #333;
  color: var(--muted-color);
  font-size: 9.4px;
  line-height: 17px;
}

.term-tab {
  padding: 0 8.200px;
  border-right: 1px solid #c4c4c4;
  white-space: nowrap;
}

.term-tab:first-child {
  padding: 0 7.500px 0 9px;
}

.term-tab.active {
  color: #333;
  background-color: #fff;
  border-left: 1px solid #555;
  border-right: 1px solid #555;
  margin-left: -1px;
}

.term-tab sub {
  color: #d22;
  font-size: 8px;
  font-weight: bold;
  margin-left: 2px;
  line-height: 0;
}

.watermark {
  position: absolute;
  right: 20px;
  bottom: 4px;
  display: flex;
  align-items: center;
  gap: 5px;
  color: #f08a6d;
  font-family: "Liberation Sans", sans-serif;
  font-weight: bold;
  font-size: 8.500px;
}

.watermark svg {
  width: 20px;
  height: 20px;
}
```
